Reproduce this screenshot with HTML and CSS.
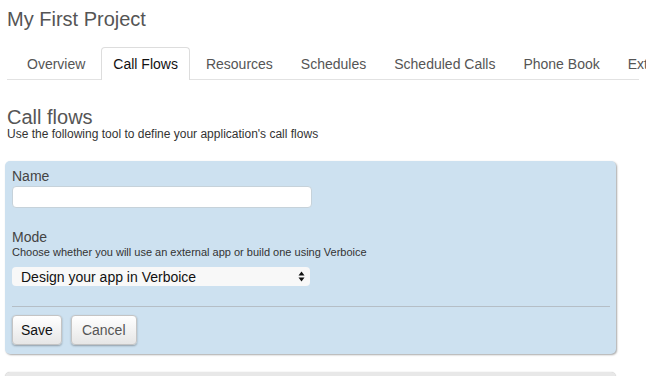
FILE: index.html
```html
<!DOCTYPE html>
<html lang="en">
  <head>
    <meta charset="UTF-8" />
    <title>Call Flows</title>
    <link rel="stylesheet" href="styles.css">
  </head>
  <body>
    <h1 class="project">My First Project</h1>

    <ul class="tabs">
      <li class="tab">Overview</li>
      <li class="tab active">Call Flows</li>
      <li class="tab">Resources</li>
      <li class="tab">Schedules</li>
      <li class="tab">Scheduled Calls</li>
      <li class="tab">Phone Book</li>
      <li class="tab">Ext</li>
    </ul>

    <h2 class="title">Call flows</h2>
    <p class="subtitle">Use the following tool to define your application's call flows</p>

    <form class="box">
      <label class="label">Name</label>
      <input type="text" class="field" />

      <label class="label mode">Mode</label>
      <p class="help">Choose whether you will use an external app or build one using Verboice</p>
      <div class="select">
        <span>Design your app in Verboice</span>
        <svg width="7" height="11" viewBox="0 0 7 11">
          <path d="M3.5 0.5 L6.5 4.5 L0.5 4.5 Z M3.5 10.5 L6.5 6.5 L0.5 6.5 Z" fill="#111" />
        </svg>
      </div>

      <hr class="sep" />

      <div class="actions">
        <button type="button" class="btn save">Save</button>
        <button type="button" class="btn">Cancel</button>
      </div>
    </form>

    <div class="box grey"></div>
  </body>
</html>
```

FILE: styles.css
```css
body {
  margin: 0;
  padding: 0 7px;
  font-family: "Liberation Sans", Arial, sans-serif;
  color: #444;
  overflow: hidden;
}
.project {
  margin: 0;
  padding-top: 7px;
  font-size: 20px;
  font-weight: normal;
  line-height: 24px;
  color: #555;
}
.tabs {
  list-style: none;
  margin: 16px 0 0 0;
  padding: 0 0 0 8px;
  display: flex;
  gap: 4px;
  border-bottom: 1px solid #e2e2e2;
  white-space: nowrap;
}
.tab {
  padding: 6px 11px 5px;
  line-height: 20px;
  font-size: 14px;
  color: #555;
  border: 1px solid transparent;
  border-bottom: none;
  border-radius: 4px 4px 0 0;
  margin-bottom: -1px;
}
.tab.active {
  color: #111;
  background: #fff;
  border-color: #ddd;
  padding-bottom: 6px;
}
.title {
  margin: 26px 0 0 0;
  font-size: 20px;
  font-weight: normal;
  line-height: 22px;
  color: #555;
}
.subtitle {
  margin: 0;
  font-size: 12px;
  line-height: 13px;
  color: #333;
}
.box {
  margin: 20px 0 0 -2px;
  width: 598px;
  padding: 6px 6px 9px 7px;
  background: #cde1f0;
  border-radius: 5px;
  box-shadow: 1px 1px 2px rgba(0, 0, 0, 0.35);
  display: flex;
  flex-direction: column;
  align-items: flex-start;
}
.label {
  font-size: 14px;
  line-height: 18px;
  color: #444;
}
.field {
  margin: 1px 0 0 0;
  width: 296px;
  height: 18px;
  border: 1px solid #c6d2da;
  border-radius: 4px;
  background: #fff;
  padding: 1px;
}
.mode {
  margin-top: 20px;
}
.help {
  margin: 0;
  font-size: 11px;
  line-height: 13px;
  color: #333;
}
.select {
  margin-top: 8px;
  width: 284px;
  height: 19px;
  padding: 0 5px 0 9px;
  background: #f8f8f8;
  border-radius: 4px;
  display: flex;
  align-items: center;
  justify-content: space-between;
  font-size: 14px;
  color: #111;
}
.sep {
  width: 100%;
  margin: 20px 0 0 0;
  border: none;
  border-top: 1px solid #b5bec6;
}
.actions {
  margin-top: 8px;
  display: flex;
  gap: 9px;
}
.btn {
  font-family: inherit;
  font-size: 14px;
  height: 30px;
  padding: 0 10px;
  border: 1px solid #c4c4c4;
  border-radius: 4px;
  background: linear-gradient(#ffffff, #e6e6e6);
  box-shadow: 0 1px 2px rgba(0, 0, 0, 0.3);
  color: #555;
}
.btn.save {
  padding: 0 8px;
  color: #111;
}
.grey {
  margin-top: 18px;
  height: 40px;
  background: #e8e8e8;
  box-shadow: 0 0 1px rgba(0, 0, 0, 0.3);
}
```
